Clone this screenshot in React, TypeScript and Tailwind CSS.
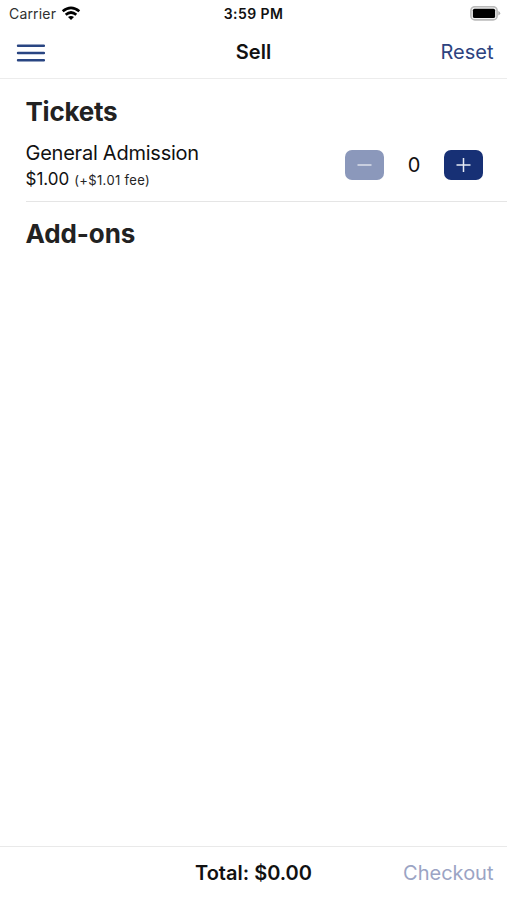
import type { ReactNode } from "react";

function WifiIcon() {
  return (
    <svg className="ml-[4px] block" width="20" height="15" viewBox="0 0 20 15" fill="none" stroke="#000" strokeWidth="2.7">
      <path d="M1.7 5.2Q10 -1.6 18.3 5.2" />
      <path d="M4.7 8.7Q10 4.3 15.3 8.7" />
      <path d="M7 11Q10 8.8 13 11L10 13.9Z" fill="#000" stroke="none" />
    </svg>
  );
}

function BatteryIcon() {
  return (
    <svg className="block" width="31" height="15" viewBox="0 0 31 15">
      <rect x="0.9" y="0.7" width="26.2" height="13.2" rx="4" fill="#f2f2f2" stroke="#bababa" strokeWidth="1.6" />
      <rect x="2.9" y="2.7" width="22.2" height="9.3" rx="1.6" fill="#000" />
      <path d="M28.3 5Q30.2 6 30.2 7.3T28.3 9.6Z" fill="#b0b0b0" />
    </svg>
  );
}

function StepButton({ label, disabled, children }: { label: string; disabled?: boolean; children: ReactNode }) {
  return (
    <button
      aria-label={label}
      disabled={disabled}
      className={`flex h-[30px] w-[39px] items-center justify-center rounded-[7px] ${disabled ? "bg-[#8b98bb]" : "bg-[#173075]"}`}
    >
      <svg width="15" height="15" viewBox="0 0 15 15" fill="none" stroke={disabled ? "#dce0eb" : "#e8ecf5"} strokeWidth="1.5">
        {children}
      </svg>
    </button>
  );
}

export default function App() {
  return (
    <div className="flex h-[900px] w-[507px] flex-col bg-white font-['Inter',sans-serif] text-[#111]">
      <div className="grid h-[27px] grid-cols-3 items-center">
        <div className="flex items-center pl-[9px] text-[14px] leading-[27px]">
          <span className="w-[48px] tracking-[0.18px] text-[#303030]">Carrier</span>
          <WifiIcon />
        </div>
        <span className="text-center text-[14px] leading-[27px] font-semibold tracking-[0.4px]">3:59 PM</span>
        <div className="flex justify-end pr-[6px]">
          <BatteryIcon />
        </div>
      </div>
      <header className="grid h-[52px] grid-cols-3 items-center border-b border-[#ececec]">
        <button aria-label="Menu" className="ml-4 w-[29px]">
          <svg className="block" width="29" height="18" viewBox="0 0 29 18" stroke="#294582" strokeWidth="2.4" strokeLinecap="round">
            <path d="M2 1.7H28M2 9H28M2 16.3H28" />
          </svg>
        </button>
        <h1 className="pb-[2px] text-center text-[20px] font-semibold">Sell</h1>
        <button className="pr-[13.5px] pb-[2px] text-right text-[20px] text-[#2d437f]">Reset</button>
      </header>
      <main className="flex-1 pl-[25.5px]">
        <h2 className="pt-[15px] text-[26px] leading-9 font-bold tracking-[-0.25px] text-[#222]">Tickets</h2>
        <div className="flex h-[72px] items-start justify-between border-b border-[#e5e5e5]">
          <div className="pt-[10px]">
            <div className="text-[20px] leading-[27px] tracking-[-0.24px]">General Admission</div>
            <div className="flex items-baseline gap-[5px] leading-6">
              <span className="text-[17px]">$1.00</span>
              <span className="text-[13px] tracking-[0.35px] text-[#252525]">(+$1.01 fee)</span>
            </div>
          </div>
          <div className="flex items-center pt-[20px] pr-6">
            <StepButton label="Remove ticket" disabled>
              <path d="M0.5 7H14.5" />
            </StepButton>
            <span className="w-[60px] text-center text-[20px] leading-[30px]">0</span>
            <StepButton label="Add ticket">
              <path d="M0.5 7H14.5M7.5 0V14" />
            </StepButton>
          </div>
        </div>
        <h2 className="pt-[14px] text-[26px] leading-9 font-bold tracking-[-0.1px] text-[#222]">Add-ons</h2>
      </main>
      <footer className="grid h-[54px] grid-cols-3 items-center border-t border-[#e9e9e9]">
        <div />
        <span className="pb-[2px] text-center text-[20px] font-semibold">Total: $0.00</span>
        <button disabled className="pr-[13.5px] pb-[2px] text-right text-[20px] text-[#9ba4c4]">Checkout</button>
      </footer>
    </div>
  );
}
